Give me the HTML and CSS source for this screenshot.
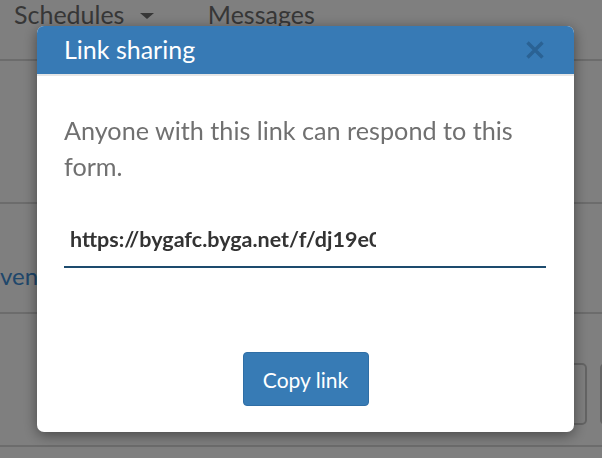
FILE: index.html
```html
<!DOCTYPE html>
<html lang="en">
  <head>
    <meta charset="UTF-8" />
    <meta name="viewport" content="width=device-width, initial-scale=1.0" />
    <title>Link sharing</title>
    <link rel="stylesheet" href="styles.css">
  </head>
  <body>
    <div class="page">
      <nav class="top-nav">
        <span class="nav-item">Schedules <span class="caret"></span></span>
        <span class="nav-item">Messages</span>
      </nav>
      <div class="section section-tall"></div>
      <div class="section section-event">
        <span class="event-link">vents</span>
      </div>
      <div class="section section-actions">
        <span class="ghost-btn"></span>
        <span class="ghost-btn"></span>
      </div>
    </div>

    <div class="backdrop"></div>

    <div class="modal">
      <div class="modal-header">
        <h2>Link sharing</h2>
        <button class="close" type="button" aria-label="Close">
          <svg width="18" height="18" viewBox="0 0 18 18">
            <path d="M1.5 1.5 L16.5 16.5 M16.5 1.5 L1.5 16.5" stroke="currentColor" stroke-width="3.4" />
          </svg>
        </button>
      </div>
      <div class="modal-body">
        <p class="info">Anyone with this link can respond to this form.</p>
        <div class="link-field">
          <span class="link-text">https://bygafc.byga.net/f/dj19e0a7c2</span>
        </div>
      </div>
      <div class="modal-footer">
        <button class="copy-btn" type="button">Copy link</button>
      </div>
    </div>
  </body>
</html>
```

FILE: styles.css
```css
body {
  margin: 0;
  font-family: Lato, "Open Sans", sans-serif;
  background-color: #ffffff;
  overflow: hidden;
}

.page {
  width: 602px;
  height: 458px;
  overflow: hidden;
}

.top-nav {
  display: flex;
  height: 61px;
  padding-left: 14px;
  border-bottom: 2px solid #d8d8d8;
  box-sizing: border-box;
}

.nav-item {
  font-size: 25px;
  line-height: 1.2;
  color: #6e6e6e;
  margin-right: 54px;
  margin-top: -1px;
}

.caret {
  display: inline-block;
  width: 0;
  height: 0;
  margin-left: 9px;
  vertical-align: 5px;
  border-left: 7px solid transparent;
  border-right: 7px solid transparent;
  border-top: 6px solid #6e6e6e;
}

.section {
  border-bottom: 2px solid #d8d8d8;
  box-sizing: border-box;
}

.section-tall {
  height: 143px;
}

.section-event {
  height: 110px;
  padding-top: 58px;
}

.event-link {
  font-size: 24px;
  line-height: 1.2;
  color: #3e8ed6;
}

.section-actions {
  height: 133px;
  display: flex;
  justify-content: flex-end;
  align-items: flex-start;
  gap: 13px;
  padding-top: 49px;
  margin-right: -48px;
}

.ghost-btn {
  width: 50px;
  height: 62px;
  border: 2px solid #c9c9c9;
  border-radius: 5px;
  box-sizing: border-box;
}

.backdrop {
  position: fixed;
  inset: 0;
  background-color: rgba(0, 0, 0, 0.5);
}

.modal {
  position: fixed;
  top: 26px;
  left: 37px;
  width: 537px;
  height: 406px;
  background-color: #ffffff;
  border-radius: 7px;
  overflow: hidden;
  box-shadow: 0 3px 14px rgba(0, 0, 0, 0.45);
  display: flex;
  flex-direction: column;
}

.modal-header {
  height: 48px;
  flex: none;
  background-color: #377ab5;
  border-bottom: 2px solid #e6e6e6;
  display: flex;
  align-items: center;
  justify-content: space-between;
  padding: 0 30px 0 27px;
}

.modal-header h2 {
  margin: 0;
  color: #ffffff;
  font-size: 25px;
  font-weight: normal;
  line-height: 1.2;
  margin-top: -2px;
}

.close {
  background: none;
  border: none;
  padding: 0;
  color: #2a6294;
  display: flex;
}

.modal-body {
  padding: 0 27px;
  flex: 1;
}

.info {
  margin: 36px 0 0 0;
  font-size: 25.2px;
  line-height: 36px;
  color: #707070;
}

.link-field {
  margin-top: 43px;
  width: 482px;
  border-bottom: 2px solid #1d4b6e;
  padding: 0 0 13px 6px;
  box-sizing: border-box;
}

.link-text {
  display: block;
  width: 306px;
  overflow: hidden;
  white-space: nowrap;
  font-size: 21.5px;
  line-height: 1.2;
  font-weight: bold;
  color: #333333;
}

.modal-footer {
  display: flex;
  justify-content: center;
  padding-bottom: 26px;
}

.copy-btn {
  width: 126px;
  height: 54px;
  background-color: #377bb5;
  border: 1px solid #2f6ea5;
  border-radius: 4px;
  color: #ffffff;
  font-family: Lato, sans-serif;
  font-size: 21px;
}
```
